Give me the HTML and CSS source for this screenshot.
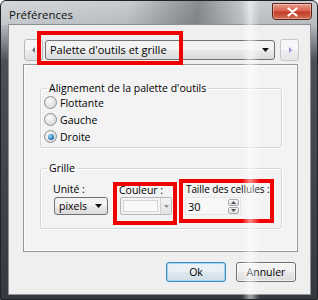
FILE: index.html
```html
<!DOCTYPE html>
<html>
<head>
    <title>Préférences</title>
    <link rel="stylesheet" href="styles.css">
</head>
<body>

<div class="window">
    <!-- Title bar -->
    <div class="titlebar">
        <span class="title">Préférences</span>
        <button type="button" class="close" aria-label="Fermer">
            <svg width="11" height="10" viewBox="0 0 11 10"><path d="M1.5 1.5 L9.5 8.5 M9.5 1.5 L1.5 8.5" stroke="#fff" stroke-width="2.2" stroke-linecap="round"/></svg>
        </button>
    </div>

    <div class="client">
        <!-- Page selector -->
        <div class="nav-row">
            <button type="button" class="nav-btn"><svg width="4" height="6" viewBox="0 0 4 6"><path d="M3 0 L0 3 L3 6 Z" fill="#6d7278"/></svg></button>
            <div class="combo page-combo">
                <span>Palette d'outils et grille</span>
                <svg width="7" height="4" viewBox="0 0 7 4"><path d="M0 0 H7 L3.5 4 Z" fill="#111"/></svg>
            </div>
            <button type="button" class="nav-btn light"><svg width="4" height="6" viewBox="0 0 4 6"><path d="M1 0 L4 3 L1 6 Z" fill="#8f8fd6"/></svg></button>
        </div>

        <div class="panel">
            <fieldset class="group">
                <legend>Alignement de la palette d'outils</legend>
                <div class="options">
                    <label class="radio"><span class="dot"></span>Flottante</label>
                    <label class="radio"><span class="dot"></span>Gauche</label>
                    <label class="radio"><span class="dot checked"></span>Droite</label>
                </div>
            </fieldset>

            <fieldset class="group grid-group">
                <legend>Grille</legend>
                <div class="fields">
                    <div class="field unit">
                        <span class="field-label">Unité :</span>
                        <div class="combo small-combo">
                            <span>pixels</span>
                            <svg width="7" height="4" viewBox="0 0 7 4"><path d="M0 0 H7 L3.5 4 Z" fill="#111"/></svg>
                        </div>
                    </div>
                    <div class="field colour">
                        <span class="field-label">Couleur :</span>
                        <div class="colour-combo">
                            <span class="swatch"></span>
                            <span class="drop"><svg width="5" height="3" viewBox="0 0 5 3"><path d="M0 0 H5 L2.5 3 Z" fill="#8a8f94"/></svg></span>
                        </div>
                    </div>
                    <div class="field size">
                        <span class="field-label">Taille des cellules :</span>
                        <div class="spin">
                            <span class="spin-value">30</span>
                            <span class="spin-btns">
                                <span class="spin-btn"><svg width="5" height="3" viewBox="0 0 5 3"><path d="M0 3 H5 L2.5 0 Z" fill="#4d5358"/></svg></span>
                                <span class="spin-btn"><svg width="5" height="3" viewBox="0 0 5 3"><path d="M0 0 H5 L2.5 3 Z" fill="#4d5358"/></svg></span>
                            </span>
                        </div>
                    </div>
                </div>
            </fieldset>
        </div>

        <div class="actions">
            <button type="button" class="btn default">Ok</button>
            <button type="button" class="btn">Annuler</button>
        </div>
    </div>

    <!-- Red annotation marks drawn over the dialog -->
    <div class="mark mark-page"></div>
    <div class="mark mark-colour"></div>
    <div class="mark mark-size"></div>

    <!-- Glass reflection -->
    <div class="streak"></div>
</div>

</body>
</html>
```

FILE: styles.css
```css
/* Windows 7 style dialog */
* {
    box-sizing: border-box;
}
body {
    margin: 0;
    font-family: "Open Sans", "Liberation Sans", sans-serif;
    font-size: 10.5px;
    color: #000;
}
.window {
    position: relative;
    width: 318px;
    height: 300px;
    display: flex;
    flex-direction: column;
    padding: 0 7px 5px 8px;
    overflow: hidden;
    border: 1px solid #1f2327;
    border-radius: 6px 6px 0 0;
    background: linear-gradient(to bottom, #c9cdd1 0, #b6bbc0 24px, #4a5056 60px, #353a40 100%);
}
.titlebar {
    height: 24px;
    display: flex;
    align-items: flex-start;
    justify-content: space-between;
    background: linear-gradient(100deg, rgba(255,255,255,0.2) 0%, rgba(255,255,255,0) 40%, rgba(40,44,48,0.4) 62%, rgba(255,255,255,0) 76%);
    margin: 0 -7px 0 -8px;
    padding: 0 0 0 8px;
}
.title {
    margin-top: 6px;
    font-size: 11.5px;
    line-height: 15px;
    color: #111;
}
.close {
    margin: 2px 5px 0 0;
    width: 40px;
    height: 17px;
    padding: 0;
    display: flex;
    align-items: center;
    justify-content: center;
    border: 1px solid #5e2219;
    border-radius: 0 0 4px 4px;
    background: linear-gradient(#e69c8b 0, #d6604b 48%, #c13a26 52%, #cf6d55 100%);
    box-shadow: inset 0 0 0 1px rgba(255,255,255,0.35);
}
.client {
    flex: 1;
    display: flex;
    flex-direction: column;
    background: #efefef;
    box-shadow: 0 0 0 1px #8d9297;
}

/* Page selector row */
.nav-row {
    display: flex;
    align-items: center;
    margin: 13px 0 0 15px;
    height: 23px;
}
.nav-btn {
    width: 19px;
    height: 22px;
    padding: 0;
    display: flex;
    align-items: center;
    justify-content: center;
    border: 1px solid #b9b9b9;
    border-radius: 3px;
    background: linear-gradient(#f6f6f6 0 50%, #ececec 50%, #e0e0e0);
}
.nav-btn.light {
    border-color: #c8c8c8;
    background: linear-gradient(#f7f7f9 0 50%, #eeeef2 50%, #e6e6ea);
}
.combo {
    display: flex;
    align-items: center;
    justify-content: space-between;
    border: 1px solid #707070;
    border-radius: 3px;
    background: linear-gradient(#f3f3f3 0 50%, #e9e9e9 50%, #dcdcdc);
    white-space: nowrap;
}
.page-combo {
    width: 230px;
    height: 20px;
    margin: 0 5px 0 2px;
    padding: 0 5px 0 4px;
    font-size: 11px;
}

/* Tab page */
.panel {
    width: 275px;
    height: 188px;
    margin: 3px 0 0 14px;
    padding: 15px 0 0 16px;
    border: 1px solid #979797;
    background: #f3f3f3;
    box-shadow: inset 0 0 0 1px #fbfbfb;
}
.group {
    width: 242px;
    margin: 0;
    padding: 0 0 2px 3px;
    border: 1px solid #d0d7dc;
    border-radius: 3px;
    box-shadow: inset 1px 1px 0 #fff, 1px 1px 0 #fff;
}
.group legend {
    margin-left: 3px;
    padding: 0 2px;
    line-height: 16px;
}
.options {
    margin-top: -2px;
}
.radio {
    display: flex;
    align-items: center;
    gap: 3px;
    height: 17px;
}
.dot {
    width: 13px;
    height: 13px;
    border-radius: 50%;
    border: 1px solid #8e8f8f;
    background: radial-gradient(circle at 40% 35%, #fdfdfd 0, #e3e3e3 55%, #cfcfcf 100%);
    display: flex;
    align-items: center;
    justify-content: center;
}
.dot.checked::after {
    content: "";
    width: 6px;
    height: 6px;
    border-radius: 50%;
    background: radial-gradient(circle at 35% 35%, #9fd6f3 0, #2a7fb8 60%, #0e4f7e 100%);
}

/* Grid settings */
.grid-group {
    margin-top: 12px;
    padding-bottom: 13px;
}
.fields {
    display: flex;
    margin: 5px 0 0 9px;
}
.field {
    display: flex;
    flex-direction: column;
}
.field-label {
    padding-top: 2px;
    line-height: 13px;
    white-space: nowrap;
}
.unit {
    width: 66px;
}
.colour {
    width: 67px;
}
.colour .field-label {
    padding-top: 3px;
    line-height: 12px;
}
.size .field-label {
    font-size: 10px;
    letter-spacing: -0.1px;
}
.small-combo {
    width: 54px;
    height: 18px;
    margin: 1px 0 0 1px;
    padding: 0 5px 0 4px;
}
.colour-combo {
    width: 52px;
    height: 18px;
    margin: 1px 0 0 1px;
    display: flex;
    border: 1px solid #b3b7ba;
    border-radius: 2px;
    background: #f4f4f4;
}
.swatch {
    flex: 1;
    margin: 2px;
    border: 1px solid #d4d6d8;
    background: #f9f9f9;
}
.drop {
    width: 11px;
    display: flex;
    align-items: center;
    justify-content: center;
    border-left: 1px solid #d0d3d5;
    background: linear-gradient(#f3f3f3, #e4e4e4);
}
.spin {
    width: 56px;
    height: 18px;
    margin: 1px 0 0 -1px;
    display: flex;
    align-items: center;
    justify-content: space-between;
    padding: 0 1px 0 2px;
    border: 1px solid #e4e6e8;
    background: #f7f7f7;
}
.spin-value {
    font-size: 11px;
}
.spin-btns {
    display: flex;
    flex-direction: column;
    gap: 1px;
}
.spin-btn {
    width: 11px;
    height: 7px;
    display: flex;
    align-items: center;
    justify-content: center;
    border: 1px solid #a9adb1;
    border-radius: 2px;
    background: linear-gradient(#f7f7f7, #dedede);
}

/* Dialog buttons */
.actions {
    display: flex;
    justify-content: flex-end;
    gap: 10px;
    margin-top: 10px;
    padding-right: 14px;
}
.btn {
    width: 60px;
    height: 20px;
    padding: 0;
    font-family: inherit;
    font-size: 10.5px;
    color: #000;
    border: 1px solid #707070;
    border-radius: 3px;
    background: linear-gradient(#f2f2f2 0 50%, #e8e8e8 50%, #dcdcdc);
    box-shadow: inset 0 0 0 1px rgba(255,255,255,0.6);
}
.btn.default {
    border-color: #3d87c0;
    background: linear-gradient(#e9f1f6 0 50%, #dde8ef 50%, #d2dfe8);
    box-shadow: inset 0 0 0 1px #9fd3f2;
}

/* Annotation marks */
.mark {
    position: absolute;
    border: 4px solid #f20000;
}
.mark-page {
    left: 36px;
    top: 30px;
    width: 146px;
    height: 34px;
}
.mark-colour {
    left: 112px;
    top: 181px;
    width: 64px;
    height: 43px;
}
.mark-size {
    left: 178px;
    top: 178px;
    width: 95px;
    height: 44px;
}
.streak {
    position: absolute;
    top: 0;
    bottom: 0;
    left: 241px;
    width: 18px;
    pointer-events: none;
    background: linear-gradient(90deg, rgba(255,255,255,0) 0, rgba(255,255,255,0.55) 45%, rgba(255,255,255,0.3) 70%, rgba(255,255,255,0) 100%);
}
```
